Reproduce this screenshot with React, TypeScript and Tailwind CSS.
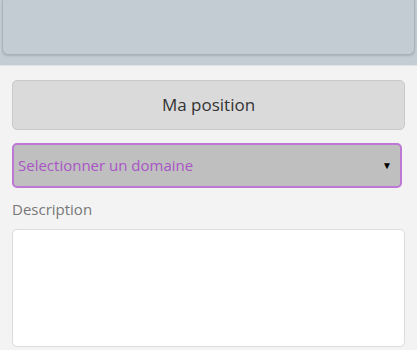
export default function App() {
  return (
    <div className="w-[417px] h-[350px] overflow-hidden bg-[#f3f3f3]" style={{ fontFamily: '"Open Sans", sans-serif' }}>
      <div className="h-[66px] bg-[#c5cdd4] border-b border-[#dfe4e8] pt-0">
        <div className="mx-[2px] h-[55px] bg-[#c4ccd3] border border-t-0 border-[#aab3ba] rounded-b-[6px] shadow-[0_1px_2px_rgba(0,0,0,0.15)]" />
      </div>
      <div className="px-[12px] pt-[14px]">
        <div className="h-[50px] w-[393px] rounded-[5px] border border-[#c9c9c9] bg-[#dadada] flex items-center justify-center text-[17px] text-[#333]">
          Ma position
        </div>
        <div className="mt-[13px] h-[45px] w-[390px] rounded-[5px] border-2 border-[#bd78d6] bg-[#bfbfbf] flex items-center justify-between pl-[4px] pr-[8px]">
          <span className="text-[15px] text-[#a955c6]">Selectionner un domaine</span>
          <span className="text-[10px] text-black">▼</span>
        </div>
        <div className="mt-[11px] text-[15px] text-[#777] leading-[20px]">Description</div>
        <div className="mt-[10px] h-[118px] w-[393px] rounded-[5px] border border-[#dcdcdc] bg-white" />
      </div>
    </div>
  );
}
